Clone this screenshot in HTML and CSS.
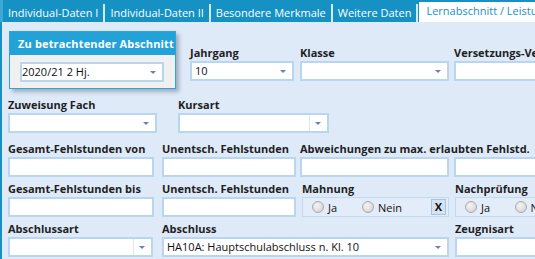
FILE: index.html
```html
<!DOCTYPE html>
<html lang="de">
<head>
    <meta charset="UTF-8">
    <title>Lernabschnitt</title>
    <link rel="stylesheet" href="styles.css">
</head>
<body>
    <div class="tabs">
        <div class="tab">Individual-Daten I</div>
        <div class="tab">Individual-Daten II</div>
        <div class="tab">Besondere Merkmale</div>
        <div class="tab">Weitere Daten</div>
        <div class="tab active">Lernabschnitt / Leistungsdaten</div>
    </div>
    <div class="panel">
        <!-- Abschnitt + Jahrgang -->
        <div class="row row_top">
            <div class="group">
                <div class="group_head">Zu betrachtender Abschnitt</div>
                <div class="group_body">
                    <div class="input select flat">2020/21 2 Hj.<span class="arrow"></span></div>
                </div>
            </div>
            <div class="field f_jahrgang">
                <div class="label">Jahrgang</div>
                <div class="input select">10<span class="arrow"></span></div>
            </div>
            <div class="field f_klasse">
                <div class="label">Klasse</div>
                <div class="input select"><span class="arrow"></span></div>
            </div>
            <div class="field f_versetzung">
                <div class="label">Versetzungs-Vermerk</div>
                <div class="input"></div>
            </div>
        </div>

        <div class="row row_kurs">
            <div class="field f_fach">
                <div class="label">Zuweisung Fach</div>
                <div class="input select"><span class="arrow"></span></div>
            </div>
            <div class="field f_kursart">
                <div class="label">Kursart</div>
                <div class="input select"><span class="split"></span><span class="arrow"></span></div>
            </div>
        </div>

        <div class="row row_fehl">
            <div class="field c1">
                <div class="label">Gesamt-Fehlstunden von</div>
                <div class="input"></div>
            </div>
            <div class="field c2">
                <div class="label">Unentsch. Fehlstunden</div>
                <div class="input"></div>
            </div>
            <div class="field c3">
                <div class="label">Abweichungen zu max. erlaubten Fehlstd.</div>
                <div class="input"></div>
            </div>
            <div class="field c4">
                <div class="label">&nbsp;</div>
                <div class="input"></div>
            </div>
        </div>

        <div class="row row_next">
            <div class="field c1">
                <div class="label">Gesamt-Fehlstunden bis</div>
                <div class="input"></div>
            </div>
            <div class="field c2">
                <div class="label">Unentsch. Fehlstunden</div>
                <div class="input"></div>
            </div>
            <div class="field c3_radio">
                <div class="label">Mahnung</div>
                <div class="radios">
                    <span class="radio"><i></i>Ja</span>
                    <span class="radio"><i></i>Nein</span>
                    <span class="clear">X</span>
                </div>
            </div>
            <div class="field c4_radio">
                <div class="label">Nachprüfung</div>
                <div class="radios">
                    <span class="radio"><i></i>Ja</span>
                    <span class="radio"><i></i>Nein</span>
                </div>
            </div>
        </div>

        <div class="row row_next">
            <div class="field c1_sel">
                <div class="label">Abschlussart</div>
                <div class="input select"><span class="split"></span><span class="arrow"></span></div>
            </div>
            <div class="field c_abschluss">
                <div class="label">Abschluss</div>
                <div class="input select">HA10A: Hauptschulabschluss n. Kl. 10<span class="arrow"></span></div>
            </div>
            <div class="field c4_zeugnis">
                <div class="label">Zeugnisart</div>
                <div class="input"></div>
            </div>
        </div>
    </div>
</body>
</html>
```

FILE: styles.css
```css
body {
    margin: 0;
    width: 535px;
    height: 259px;
    overflow: hidden;
    font-family: "Open Sans", "Noto Sans", sans-serif;
    font-size: 11px;
    color: #1e1e1e;
    background: #dfeaf8;
}

/* Reiter */
.tabs {
    display: flex;
    align-items: flex-end;
    height: 22px;
    background: #1591c4;
    border-left: 3px solid #3fa9d6;
    white-space: nowrap;
}
.tab {
    flex-shrink: 0;
    height: 18px;
    line-height: 18px;
    padding: 0 5px;
    color: #fff;
    border-right: 2px solid #d4e9f6;
}
.tab.active {
    height: 20px;
    line-height: 16px;
    padding: 1px 7px 0 7px;
    box-sizing: border-box;
    background: #fff;
    color: #1a8fc4;
    border-right: none;
    margin-left: 1px;
}

.panel {
    height: 237px;
    box-sizing: border-box;
    border-left: 2px solid #1591c4;
    padding: 9px 0 0 6px;
}

.row {
    display: flex;
    align-items: flex-start;
    white-space: nowrap;
}
.row > div {
    flex-shrink: 0;
}
.row_top {
    height: 58px;
}
.row_kurs {
    margin-top: 9px;
}
.row_fehl {
    margin-top: 9px;
}
.row_next {
    margin-top: 5px;
}

/* Gruppe Abschnitt */
.group {
    margin-left: 1px;
    width: 167px;
    height: 58px;
    box-sizing: border-box;
    border: 1px solid #2ea5d8;
    box-shadow: 3px 3px 4px rgba(40, 60, 90, 0.35);
}
.group_head {
    height: 23px;
    line-height: 23px;
    padding-left: 8px;
    background: #22a2d7;
    color: #fff;
    font-weight: bold;
    letter-spacing: 0.15px;
    overflow: hidden;
}
.group_body {
    height: 33px;
    box-sizing: border-box;
    background: #f0f0f0;
    padding: 7px 0 0 10px;
}
.group_body .input {
    width: 144px;
}

.label {
    height: 13px;
    line-height: 13px;
    margin-bottom: 2px;
    font-weight: bold;
}

.input {
    display: flex;
    align-items: center;
    height: 20px;
    box-sizing: border-box;
    border: 2px solid #b8d6f0;
    background: #fff;
    padding-left: 3px;
    line-height: 16px;
    color: #111;
}
.input.flat {
    padding-left: 0;
}
.arrow {
    margin-left: auto;
    margin-right: 6px;
    width: 0;
    height: 0;
    border-left: 3px solid transparent;
    border-right: 3px solid transparent;
    border-top: 3px solid #6682b3;
}
.split {
    margin-left: auto;
    width: 1px;
    height: 16px;
    background: #dbe7f3;
}
.split + .arrow {
    margin-left: 5px;
    margin-right: 6px;
}

/* Spalten */
.f_jahrgang {
    margin: 15px 0 0 14px;
    width: 104px;
}
.f_klasse {
    margin: 15px 0 0 6px;
    width: 149px;
}
.f_versetzung {
    margin: 15px 0 0 5px;
    width: 110px;
}
.f_fach {
    width: 149px;
}
.f_kursart {
    margin-left: 21px;
    width: 151px;
}
.c1 {
    width: 146px;
}
.c2 {
    margin-left: 8px;
    width: 134px;
}
.c3 {
    margin-left: 4px;
    width: 149px;
}
.c4 {
    margin-left: 5px;
    width: 110px;
}
.c3_radio {
    margin-left: 6px;
    width: 147px;
}
.c4_radio {
    margin-left: 6px;
    width: 110px;
}
.c1_sel {
    width: 145px;
}
.c_abschluss {
    margin-left: 9px;
    width: 287px;
}
.c4_zeugnis {
    margin-left: 6px;
    width: 110px;
}

/* Optionsfelder */
.radios {
    display: flex;
    align-items: center;
    height: 20px;
    box-sizing: border-box;
    border: 1px solid #c3d9ee;
    background: #e3edf9;
    padding-left: 9px;
}
.radio {
    display: flex;
    align-items: center;
    width: 50px;
    color: #111;
}
.radio i {
    width: 10px;
    height: 10px;
    margin-right: 4px;
    border: 1px solid #a9a9a9;
    border-radius: 50%;
    background: radial-gradient(circle at 40% 35%, #f4f4f4, #cfcfcf);
}
.clear {
    margin-left: auto;
    margin-right: 2px;
    width: 15px;
    height: 16px;
    box-sizing: border-box;
    border: 1px solid #a6c3e2;
    background: #d4e2f2;
    text-align: center;
    line-height: 14px;
    font-weight: bold;
    color: #111;
}
```
